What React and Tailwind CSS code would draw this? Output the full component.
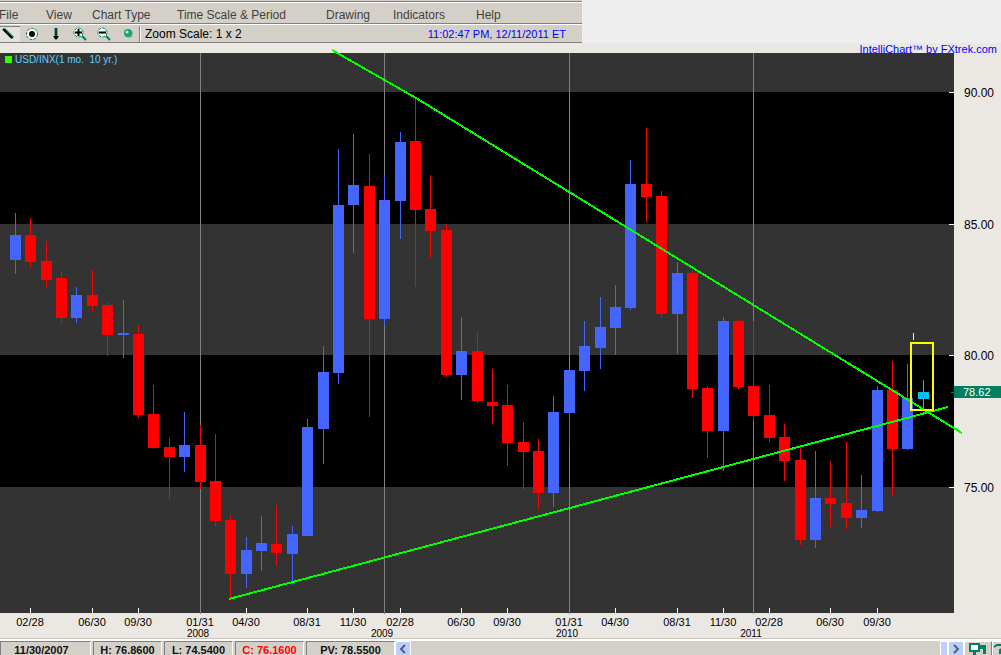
import React from 'react';

const menuItems = [
  { label: 'File', width: 'w-[47px]' },
  { label: 'View', width: 'w-[46px]' },
  { label: 'Chart Type', width: 'w-[85px]' },
  { label: 'Time Scale & Period', width: 'w-[149px]' },
  { label: 'Drawing', width: 'w-[67px]' },
  { label: 'Indicators', width: 'w-[83px]' },
  { label: 'Help', width: 'w-12' }
];

const candleColors = {
  up: '#4466ff',
  down: '#ff0000',
  live: '#00c0f0'
};

// [x, high, body top, body bottom, low, type]
const candles = [
  [15, 213, 235, 260, 274, 'up'],
  [30, 218, 235, 262, 268, 'down'],
  [46, 241, 261, 280, 287, 'down'],
  [61, 271, 278, 318, 323, 'down'],
  [76, 287, 295, 318, 323, 'up'],
  [92, 270, 295, 306, 311, 'down'],
  [107, 302, 305, 335, 356, 'down'],
  [123, 300, 333, 335, 358, 'up'],
  [138, 326, 334, 415, 418, 'down'],
  [153, 385, 414, 448, 449, 'down'],
  [169, 438, 447, 457, 500, 'down'],
  [184, 412, 445, 457, 472, 'up'],
  [200, 425, 445, 482, 489, 'down'],
  [215, 434, 481, 521, 526, 'down'],
  [230, 515, 520, 574, 601, 'down'],
  [246, 537, 550, 574, 588, 'up'],
  [261, 516, 543, 551, 571, 'up'],
  [276, 505, 544, 553, 566, 'down'],
  [292, 526, 534, 554, 585, 'up'],
  [307, 419, 427, 536, 536, 'up'],
  [323, 346, 372, 429, 464, 'up'],
  [338, 149, 205, 373, 384, 'up'],
  [353, 134, 185, 205, 253, 'up'],
  [369, 154, 186, 319, 417, 'down'],
  [384, 176, 200, 319, 326, 'up'],
  [400, 132, 142, 201, 239, 'up'],
  [415, 98, 141, 210, 287, 'down'],
  [430, 175, 209, 231, 258, 'down'],
  [446, 224, 230, 375, 377, 'down'],
  [461, 317, 351, 375, 400, 'up'],
  [477, 332, 351, 401, 403, 'down'],
  [492, 369, 402, 406, 424, 'down'],
  [507, 385, 405, 443, 466, 'down'],
  [523, 422, 442, 452, 490, 'down'],
  [538, 439, 451, 493, 509, 'down'],
  [553, 396, 412, 493, 507, 'up'],
  [569, 369, 370, 413, 446, 'up'],
  [584, 321, 346, 371, 391, 'up'],
  [600, 297, 327, 348, 369, 'up'],
  [615, 285, 307, 328, 355, 'up'],
  [630, 160, 184, 308, 310, 'up'],
  [646, 128, 184, 197, 222, 'down'],
  [661, 191, 196, 314, 318, 'down'],
  [677, 262, 273, 314, 354, 'up'],
  [692, 271, 273, 389, 398, 'down'],
  [707, 386, 388, 431, 458, 'down'],
  [723, 317, 321, 431, 471, 'up'],
  [738, 320, 321, 387, 389, 'down'],
  [753, 321, 386, 416, 421, 'down'],
  [769, 385, 415, 438, 442, 'down'],
  [784, 424, 437, 461, 481, 'down'],
  [800, 445, 460, 540, 545, 'down'],
  [815, 451, 498, 540, 548, 'up'],
  [830, 461, 498, 504, 527, 'down'],
  [846, 442, 503, 518, 529, 'down'],
  [861, 475, 510, 518, 528, 'up'],
  [877, 386, 390, 511, 512, 'up'],
  [892, 361, 390, 449, 495, 'down'],
  [907, 364, 398, 449, 450, 'up'],
  [923, 380, 392, 399, 410, 'live']
];

const months = [
  [30, '02/28'],
  [92, '06/30'],
  [138, '09/30'],
  [200, '01/31'],
  [246, '04/30'],
  [307, '08/31'],
  [353, '11/30'],
  [400, '02/28'],
  [461, '06/30'],
  [507, '09/30'],
  [569, '01/31'],
  [615, '04/30'],
  [677, '08/31'],
  [723, '11/30'],
  [769, '02/28'],
  [830, '06/30'],
  [877, '09/30']
];

const years = [
  [200, '2008'],
  [384, '2009'],
  [569, '2010'],
  [753, '2011']
];

const prices = [
  [92, '90.00'],
  [224, '85.00'],
  [355, '80.00'],
  [487, '75.00']
];

const readings = [
  { text: '11/30/2007', style: 'w-[91px] text-[#111111] pr-2' },
  { text: 'H: 76.8600', style: 'w-[69px] text-[#111111]' },
  { text: 'L: 74.5400', style: 'w-[69px] text-[#111111]' },
  { text: 'C: 76.1600', style: 'w-[69px] text-[#ff0000]' },
  { text: 'PV: 78.5500', style: 'w-[89px] text-[#111111]' }
];

const ToolButton = ({ label, pressed, children }) => (
  <button
    type="button"
    aria-label={label}
    className={`flex h-4 w-6 shrink-0 items-center justify-center ${pressed ? '-ml-1 border-t border-[#808080] bg-[#e4e1dc]' : ''}`}
  >
    <svg width="14" height="14" viewBox="0 0 14 14" fill="none">
      {children}
    </svg>
  </button>
);

const Magnifier = ({ plus }) => (
  <>
    <path d="M9 9l4 4" stroke="#008060" strokeWidth="2" />
    <circle cx="5.5" cy="5.5" r="4.5" fill="#ffffff" stroke="#008060" strokeDasharray="3 1" />
    <path d={plus ? 'M2 5.5h7M5.5 2v7' : 'M2 5.5h7'} stroke="#000000" strokeWidth="2" />
  </>
);

const Toolbar = () => (
  <div className="flex h-[17px] items-center">
    <ToolButton label="Draw line" pressed>
      <path d="M3 2l9 9" stroke="#008060" strokeWidth="3" />
      <path d="M2 2l9 9" stroke="#000000" strokeWidth="2" />
    </ToolButton>
    <ToolButton label="Crosshair">
      <circle cx="7" cy="7" r="5.5" fill="#ffffff" stroke="#008060" strokeDasharray="3 1" />
      <circle cx="7" cy="7" r="3" fill="#000000" />
    </ToolButton>
    <ToolButton label="Arrow">
      <path d="M7 1v11" stroke="#008060" strokeWidth="3" />
      <path d="M7 1v9" stroke="#000000" strokeWidth="1" />
      <path d="M4 9h6l-3 4z" fill="#000000" />
    </ToolButton>
    <ToolButton label="Zoom in">
      <Magnifier plus />
    </ToolButton>
    <ToolButton label="Zoom out">
      <Magnifier />
    </ToolButton>
    <ToolButton label="Refresh">
      <circle cx="8" cy="7" r="4" fill="#a8a8a0" />
      <circle cx="7" cy="6" r="4" fill="#10a878" />
      <circle cx="6" cy="5" r="1.5" fill="#b0f0d8" />
    </ToolButton>
    <div className="-ml-px h-4 w-[2px] border-l border-r border-l-[#808080] border-r-white" />
    <span className="pl-1 text-[12px] leading-4 text-black">Zoom Scale: 1 x 2</span>
    <span className="ml-auto pr-4 text-[11px] leading-4 text-[#0000ff]">11:02:47 PM, 12/11/2011 ET</span>
  </div>
);

const Header = () => (
  <header className="bg-[#eeeeee]">
    <div className="w-[582px] max-w-full overflow-hidden bg-[#d4d0c8] pt-px">
      <nav className="flex h-[23px] items-center border-b border-t border-[#808080] text-[12px] text-[#404040] shadow-[inset_0_1px_0_#ffffff]">
        {menuItems.map((item, index) => (
          <button
            key={item.label}
            type="button"
            className={`shrink-0 whitespace-nowrap pt-1 text-left leading-4 ${item.width} ${index === 0 ? '-ml-px' : ''}`}
          >
            {item.label}
          </button>
        ))}
      </nav>
      <div className="border-b border-t border-b-[#808080] border-t-white">
        <Toolbar />
      </div>
    </div>
  </header>
);

const Chart = () => (
  <svg viewBox="0 43 1001 595" className="block h-auto w-full" shapeRendering="crispEdges">
    <rect x="0" y="53" width="954" height="560" fill="#000000" />
    <rect x="0" y="53" width="954" height="39" fill="#333333" />
    <rect x="0" y="224" width="954" height="131" fill="#333333" />
    <rect x="0" y="487" width="954" height="126" fill="#333333" />

    {years.map(([x]) => (
      <rect key={x} x={x} y="53" width="1" height="561" fill="#808080" />
    ))}
    {months.filter(([, label]) => label !== '01/31').map(([x]) => (
      <rect key={x} x={x} y="608" width="1" height="5" fill="#ffffff" />
    ))}

    {/* Candles */}
    {candles.map(([x, high, top, bottom, low, type]) => (
      <g key={x} fill={candleColors[type]}>
        <rect x={x} y={high} width="1" height={low - high} />
        <rect x={x - 5} y={top} width="11" height={bottom - top} />
      </g>
    ))}

    {/* Trend lines and highlighted candle */}
    <path d="M332 50L416 98L962 433M229 599L948 407" fill="none" stroke="#00ff00" strokeWidth="2" />
    <rect x="911" y="343" width="22" height="67" fill="none" stroke="#ffff00" strokeWidth="2" />
    <rect x="913" y="333" width="1" height="7" fill="#ffff80" />

    <g fontSize="12" fill="#000000">
      {prices.map(([y, label]) => (
        <g key={label}>
          <rect x="949" y={y} width="5" height="1" fill="#ffffff" />
          <text x="964" y={y + 5}>{label}</text>
        </g>
      ))}
    </g>
    <rect x="951" y="392" width="3" height="1" fill="#008060" />
    <rect x="954" y="386" width="47" height="12" fill="#008060" />
    <text x="963" y="396" fontSize="11" fill="#ffffff">78.62</text>

    <g fill="#000000" textAnchor="middle">
      {months.map(([x, label]) => (
        <text key={x} x={x} y="626" fontSize="11">{label}</text>
      ))}
      {years.map(([x, label]) => (
        <text key={label} x={x - 2} y="637" fontSize="10">{label}</text>
      ))}
    </g>

    <rect x="5" y="56" width="7" height="7" fill="#33ff00" />
    <text x="15" y="63" fontSize="10" fill="#66ccff" xmlSpace="preserve">USD/INX(1 mo.  10 yr.)</text>
  </svg>
);

const scrollButton = 'flex h-4 w-4 items-center justify-center rounded-xs border border-white bg-[#bccffb]';

const Footer = () => (
  <footer className="border-t border-[#c8c4bc] bg-[#d4d0c8]">
    <div className="flex items-start border-t-2 border-white">
      <div className="flex gap-[2px]">
        {readings.map((reading) => (
          <div
            key={reading.text}
            className={`h-4 border-l border-r border-t border-l-[#808080] border-r-white border-t-[#808080] text-center text-[11px] font-bold leading-4 whitespace-nowrap ${reading.style}`}
          >
            {reading.text}
          </div>
        ))}
      </div>
      <button type="button" aria-label="Scroll left" className={scrollButton}>
        <svg width="8" height="10" viewBox="0 0 8 10" fill="none">
          <path d="M6 1L2 5l4 4" stroke="#4d6185" strokeWidth="2" />
        </svg>
      </button>
      <div className="ml-auto flex">
        <div className="h-4 w-2 border border-white bg-[#bccffb]" />
        <button type="button" aria-label="Scroll right" className={scrollButton}>
          <svg width="8" height="10" viewBox="0 0 8 10" fill="none">
            <path d="M2 1l4 4-4 4" stroke="#4d6185" strokeWidth="2" />
          </svg>
        </button>
        <button type="button" aria-label="Windows" className="flex h-5 w-7 justify-center border border-l-white border-t-white border-r-[#808080] border-b-[#808080] pt-px">
          <svg width="18" height="14" viewBox="0 0 18 14" fill="none">
            <path d="M9 2h8v9h-3V6H9z" fill="#008060" />
            <rect x="1" y="1" width="9" height="7" fill="#ffffff" stroke="#008060" strokeWidth="2" />
            <path d="M5.5 8v6" stroke="#008060" strokeWidth="3" />
          </svg>
        </button>
        <button type="button" aria-label="Help" className="flex h-5 w-[9px] overflow-hidden border-l border-t border-white pt-px">
          <svg width="14" height="14" viewBox="0 0 14 14" fill="none" className="shrink-0">
            <path d="M1 4l3-2h6v3l-3 2v4" stroke="#008060" strokeWidth="2" />
          </svg>
        </button>
      </div>
    </div>
  </footer>
);

const App = () => (
  <div className="h-screen overflow-hidden bg-[#ebe7e2] font-['Liberation_Sans',Arial,sans-serif]">
    <Header />
    <main className="relative">
      <Chart />
      <a href="#intellichart" className="absolute right-1 top-0 text-[11px] leading-3 text-[#0000ff]">
        IntelliChart™ by FXtrek.com
      </a>
    </main>
    <Footer />
  </div>
);

export default App;
